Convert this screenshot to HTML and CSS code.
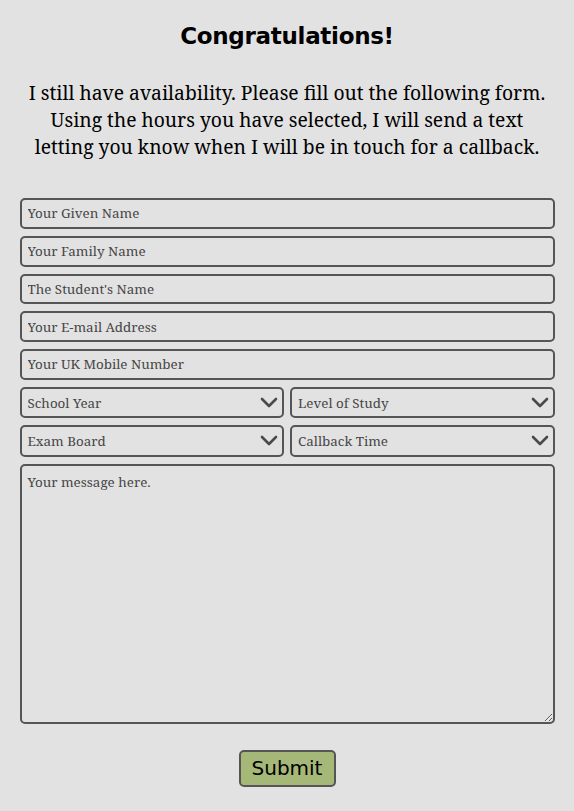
FILE: index.html
```html
<!DOCTYPE html>
<html lang="en">
<head>
<meta charset="utf-8">
<title>Congratulations</title>
<link rel="stylesheet" href="styles.css">
</head>
<body>
<main class="page">
  <h1 class="title">Congratulations!</h1>
  <p class="intro">I still have availability. Please fill out the following form. Using the hours you have selected, I will send a text letting you know when I will be in touch for a callback.</p>
  <form class="form">
    <input class="field" type="text" placeholder="Your Given Name">
    <input class="field" type="text" placeholder="Your Family Name">
    <input class="field" type="text" placeholder="The Student's Name">
    <input class="field" type="email" placeholder="Your E-mail Address">
    <input class="field" type="tel" placeholder="Your UK Mobile Number">
    <div class="pair">
      <div class="select"><span>School Year</span><svg class="chev" viewBox="0 0 18 12" width="18" height="12"><path d="M2 2 L9 9 L16 2" fill="none" stroke="#4a4a4a" stroke-width="2.6" stroke-linecap="round" stroke-linejoin="round"/></svg></div>
      <div class="select"><span>Level of Study</span><svg class="chev" viewBox="0 0 18 12" width="18" height="12"><path d="M2 2 L9 9 L16 2" fill="none" stroke="#4a4a4a" stroke-width="2.6" stroke-linecap="round" stroke-linejoin="round"/></svg></div>
    </div>
    <div class="pair">
      <div class="select"><span>Exam Board</span><svg class="chev" viewBox="0 0 18 12" width="18" height="12"><path d="M2 2 L9 9 L16 2" fill="none" stroke="#4a4a4a" stroke-width="2.6" stroke-linecap="round" stroke-linejoin="round"/></svg></div>
      <div class="select"><span>Callback Time</span><svg class="chev" viewBox="0 0 18 12" width="18" height="12"><path d="M2 2 L9 9 L16 2" fill="none" stroke="#4a4a4a" stroke-width="2.6" stroke-linecap="round" stroke-linejoin="round"/></svg></div>
    </div>
    <textarea class="message" placeholder="Your message here."></textarea>
    <div class="actions"><button class="submit" type="button">Submit</button></div>
  </form>
</main>
</body>
</html>
```
FILE: styles.css
```css
html, body {
  margin: 0;
  padding: 0;
  background: #e2e2e2;
}
.page {
  padding: 20px 20px 0 20px;
  display: flex;
  flex-direction: column;
  align-items: center;
}
.title {
  margin: 0;
  font-family: "DejaVu Sans", sans-serif;
  font-weight: bold;
  font-size: 23px;
  line-height: 32px;
  color: #000;
  letter-spacing: -0.3px;
}
.intro {
  margin: 27px 0 0 0;
  width: 530px;
  text-align: center;
  font-family: "Noto Serif", "DejaVu Serif", serif;
  font-size: 19.3px;
  line-height: 27px;
  color: #000;
}
.form {
  margin-top: 38px;
  width: 535px;
  display: flex;
  flex-direction: column;
  gap: 7px;
}
.field, .select, .message {
  box-sizing: border-box;
  background: #e2e2e2;
  border: 2px solid #555;
  border-radius: 5px;
  font-family: "Noto Serif", "DejaVu Serif", serif;
  font-size: 13.4px;
  color: #464646;
}
.field {
  height: 30.75px;
  padding: 0 6px;
  margin: 0;
  outline: none;
}
.field::placeholder, .message::placeholder {
  color: #464646;
  opacity: 1;
}
.pair {
  display: flex;
  gap: 6px;
}
.select {
  flex: 1;
  height: 31.5px;
  padding: 0 4px 0 6px;
  display: flex;
  align-items: center;
  justify-content: space-between;
}
.chev {
  display: block;
}
.message {
  height: 260px;
  padding: 7px 6px;
  margin: 0;
  resize: vertical;
  outline: none;
}
.actions {
  display: flex;
  justify-content: center;
  margin-top: 19px;
}
.submit {
  box-sizing: border-box;
  width: 97px;
  height: 37px;
  background: #a6b878;
  border: 2px solid #555;
  border-radius: 5px;
  font-family: "DejaVu Sans", sans-serif;
  font-size: 20px;
  color: #000;
  padding: 0;
}
```
